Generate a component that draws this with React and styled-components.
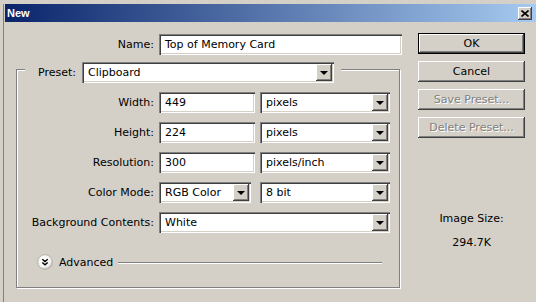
import React from "react";
import styled, { createGlobalStyle } from "styled-components";

const Global = createGlobalStyle`
  html, body {
    margin: 0;
    padding: 0;
    background: #d4d0c8;
  }
  body {
    font-family: "DejaVu Sans", "Liberation Sans", sans-serif;
    font-size: 11px;
    color: #000;
  }
`;

const Window = styled.div`
  width: 536px;
  height: 302px;
  box-sizing: border-box;
  background: #d4d0c8;
  padding: 4px 0 0 3px;
  overflow: hidden;
`;

const Frame = styled.div`
  height: 100%;
  border-left: 1px solid #808080;
  padding-left: 1px;
  display: flex;
  flex-direction: column;
`;

const TitleBar = styled.div`
  height: 18px;
  flex-shrink: 0;
  display: flex;
  align-items: center;
  padding: 0 4px 0 2px;
  background: linear-gradient(to right, #0a246a, #a6caf0);
`;

const Title = styled.span`
  font-family: "Liberation Sans", Arial, sans-serif;
  font-weight: bold;
  font-size: 11px;
  color: #fff;
`;

const CloseButton = styled.div`
  margin-left: auto;
  width: 14px;
  height: 13px;
  display: flex;
  align-items: center;
  justify-content: center;
  background: #d4d0c8;
  box-shadow: inset -1px -1px #404040, inset 1px 1px #fff,
    inset -2px -2px #808080;
`;

const Body = styled.div`
  flex: 1;
  display: flex;
  gap: 16px;
  padding-left: 11px;
`;

const Main = styled.div`
  width: 386px;
  padding-top: 12px;
`;

const NameRow = styled.div`
  display: flex;
  align-items: center;
  height: 21px;
`;

const Label = styled.span`
  text-align: right;
  white-space: nowrap;
  align-self: center;
  ${p => (p.$w ? `width: ${p.$w}px;` : "")}
  margin-right: ${p => p.$mr || 0}px;
`;

const Field = styled.div`
  box-sizing: border-box;
  height: 21px;
  width: ${p => (p.$w ? `${p.$w}px` : "100%")};
  background: #fff;
  box-shadow: inset 1px 1px #808080, inset 2px 2px #404040,
    inset -1px -1px #fff, inset -2px -2px #d4d0c8;
  display: flex;
  align-items: center;
  padding: 0 2px 0 6px;
  white-space: nowrap;
  overflow: hidden;
`;

const SelectBox = styled(Field)`
  padding: 2px 2px 2px 6px;
  align-items: stretch;
  justify-self: start;
  grid-column: ${p => p.$span || "auto"};
`;

const SelectText = styled.span`
  flex: 1;
  display: flex;
  align-items: center;
`;

const ArrowButton = styled.span`
  width: 16px;
  display: flex;
  align-items: center;
  justify-content: center;
  background: #d4d0c8;
  box-shadow: inset -1px -1px #404040, inset 1px 1px #fff,
    inset -2px -2px #808080;
  &::after {
    content: "";
    border-left: 4px solid transparent;
    border-right: 4px solid transparent;
    border-top: 4px solid #000;
    margin-top: 1px;
  }
`;

const GroupBox = styled.div`
  margin-top: 14px;
  width: 384px;
  box-sizing: border-box;
  border: 1px solid #808080;
  box-shadow: inset 1px 1px #fff, 1px 1px #fff;
  padding-bottom: 17px;
  display: flex;
  flex-direction: column;
`;

const GroupHeader = styled.div`
  align-self: flex-start;
  display: flex;
  align-items: center;
  height: 22px;
  margin: -9px 0 0 8px;
  padding: 0 7px 0 13px;
  background: #d4d0c8;
`;

const Grid = styled.div`
  margin-top: 9px;
  display: grid;
  grid-template-columns: 137px 96px 130px;
  grid-auto-rows: 21px;
  column-gap: 5px;
  row-gap: 9px;
`;

const AdvancedRow = styled.div`
  margin-top: 21px;
  height: 16px;
  display: flex;
  align-items: center;
  padding: 0 17px 0 20px;
`;

const AdvancedText = styled.span`
  margin-left: 6px;
`;

const Rule = styled.div`
  flex: 1;
  height: 1px;
  margin-left: 5px;
  background: #808080;
  box-shadow: 0 1px #fff;
`;

const Side = styled.div`
  width: 107px;
  padding-top: 11px;
  display: flex;
  flex-direction: column;
  gap: 7px;
`;

const Button = styled.div`
  box-sizing: border-box;
  height: 21px;
  display: flex;
  align-items: center;
  justify-content: center;
  background: #d4d0c8;
  color: ${p => (p.$disabled ? "#808080" : "#000")};
  text-shadow: ${p => (p.$disabled ? "1px 1px #fff" : "none")};
  border: ${p => (p.$default ? "1px solid #000" : "none")};
  box-shadow: inset -1px -1px #404040, inset 1px 1px #fff,
    inset -2px -2px #808080;
`;

const Info = styled.div`
  margin-top: 67px;
  display: flex;
  flex-direction: column;
  align-items: center;
  gap: 11px;
  line-height: 13px;
`;

const Select = ({ value, w, span }) => (
  <SelectBox $w={w} $span={span}>
    <SelectText>{value}</SelectText>
    <ArrowButton />
  </SelectBox>
);

const AdvancedIcon = () => (
  <svg width="16" height="16" viewBox="0 0 16 16">
    <defs>
      <radialGradient id="adv" cx="0.4" cy="0.35" r="0.7">
        <stop offset="0" stopColor="#ffffff" />
        <stop offset="0.7" stopColor="#f2f1ee" />
        <stop offset="1" stopColor="#b9b6ae" />
      </radialGradient>
    </defs>
    <circle cx="8" cy="8" r="7.3" fill="url(#adv)" stroke="#a8a59d" strokeWidth="0.8" />
    <path d="M5.3 5.2 L8 7.6 L10.7 5.2 M5.3 8.4 L8 10.8 L10.7 8.4" fill="none" stroke="#000" strokeWidth="1.4" />
  </svg>
);

const CloseIcon = () => (
  <svg width="8" height="7" viewBox="0 0 8 7">
    <path d="M0.5 0.5 L7.5 6.5 M7.5 0.5 L0.5 6.5" stroke="#000" strokeWidth="1.6" />
  </svg>
);

export default function App() {
  return (
    <>
      <Global />
      <Window>
        <Frame>
          <TitleBar>
            <Title>New</Title>
            <CloseButton>
              <CloseIcon />
            </CloseButton>
          </TitleBar>
          <Body>
            <Main>
              <NameRow>
                <Label $w={138} $mr={5}>Name:</Label>
                <Field $w={243}>Top of Memory Card</Field>
              </NameRow>
              <GroupBox>
                <GroupHeader>
                  <Label $mr={6}>Preset:</Label>
                  <Select value="Clipboard" w={252} />
                </GroupHeader>
                <Grid>
                  <Label>Width:</Label>
                  <Field>449</Field>
                  <Select value="pixels" />

                  <Label>Height:</Label>
                  <Field>224</Field>
                  <Select value="pixels" />

                  <Label>Resolution:</Label>
                  <Field>300</Field>
                  <Select value="pixels/inch" />

                  <Label>Color Mode:</Label>
                  <Select value="RGB Color" w={92} />
                  <Select value="8 bit" />

                  <Label>Background Contents:</Label>
                  <Select value="White" span="2 / 4" />
                </Grid>
                <AdvancedRow>
                  <AdvancedIcon />
                  <AdvancedText>Advanced</AdvancedText>
                  <Rule />
                </AdvancedRow>
              </GroupBox>
            </Main>
            <Side>
              <Button $default>OK</Button>
              <Button>Cancel</Button>
              <Button $disabled>Save Preset...</Button>
              <Button $disabled>Delete Preset...</Button>
              <Info>
                <span>Image Size:</span>
                <span>294.7K</span>
              </Info>
            </Side>
          </Body>
        </Frame>
      </Window>
    </>
  );
}
